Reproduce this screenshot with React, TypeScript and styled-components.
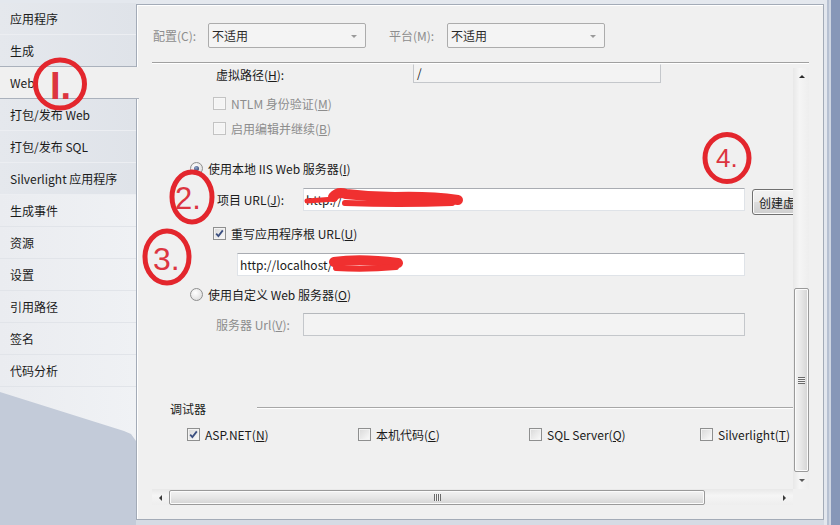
import React from "react";
import styled, { createGlobalStyle } from "styled-components";

const GlobalStyle = createGlobalStyle`
  html, body { margin: 0; padding: 0; background: #c3cbd9; }
  body {
    font-family: "Noto Sans CJK SC", "Noto Sans", sans-serif;
    font-size: 12px;
    color: #1b1b1b;
  }
  * { box-sizing: border-box; }
`;

const Frame = styled.div`
  position: relative;
  width: 840px;
  height: 525px;
  overflow: hidden;
  display: flex;
  background: #c3cbd9;
`;

/* ---------- sidebar ---------- */
const Sidebar = styled.nav`
  width: 136px;
  flex: none;
  display: flex;
  flex-direction: column;
  padding-top: 3px;
  background: linear-gradient(180deg, #e4e8ee 0 3px, #c3cbd9 3px);
  position: relative;
  z-index: 2;
`;

const Tab = styled.div<{ $active?: boolean; $tone?: "box" | "light"; $strong?: boolean }>`
  height: 32px;
  display: flex;
  align-items: center;
  padding-left: 10px;
  white-space: nowrap;
  color: #1b1b1b;
  margin-right: ${(p) => (p.$active ? "-3px" : "0")};
  background: ${(p) =>
    p.$active
      ? "#f0f0f0"
      : p.$tone === "box"
      ? "linear-gradient(90deg, #e5e8ed, #dfe3e9)"
      : "linear-gradient(90deg, #eaecf0, #eff1f4)"};
  border-bottom: 1px solid ${(p) => (p.$strong ? "#aab1bc" : p.$tone === "box" ? "#eceef2" : "#e1e4e9")};
`;

const Swoosh = styled.div`
  height: 54px;
  background: linear-gradient(90deg, #eaecf0, #f0f2f5);
  clip-path: polygon(0 0, 100% 0, 100% 54px, 131px 47px, 124px 44px, 0 5px);
`;

/* ---------- main column ---------- */
const Main = styled.div`
  width: 688px;
  flex: none;
  display: flex;
  flex-direction: column;
  padding: 4px 0 5px;
  background: linear-gradient(180deg, #e4e8ee 0 4px, #d5dbe4 4px);
`;

const RightFrame = styled.div`
  width: 16px;
  flex: none;
  background: linear-gradient(90deg, #e3e7ee 0 3px, #b7c1d2 3px 5px, #cfd6e2 5px 7px, #8797b8 7px);
`;

const Panel = styled.section`
  flex: 1;
  min-height: 0;
  border: 1px solid #a3abb7;
  background: #f0f0f0;
  box-shadow: inset 1px 1px 0 #ffffff;
  padding: 0 14px 14px 15px;
  display: flex;
  flex-direction: column;
`;

const ConfigBar = styled.div`
  height: 57px;
  flex: none;
  display: flex;
  align-items: center;
  padding: 3px 0 0 1px;
`;

const ConfigLabel = styled.span<{ $ml?: number; $w: number }>`
  flex: none;
  width: ${(p) => p.$w}px;
  color: #8d8d8d;
  margin-left: ${(p) => p.$ml ?? 0}px;
`;

const Combo = styled.div`
  position: relative;
  width: 158px;
  height: 25px;
  border: 1px solid #acacac;
  border-radius: 2px;
  background: #f4f4f4;
  display: flex;
  align-items: center;
  padding-left: 3px;
  color: #2a2a2a;
  &::after {
    content: "";
    position: absolute;
    right: 8px;
    top: 11px;
    border-left: 3px solid transparent;
    border-right: 3px solid transparent;
    border-top: 3px solid #9a9a9a;
  }
`;

const Separator = styled.div`
  height: 2px;
  flex: none;
  border-top: 1px solid #a0a0a0;
  border-bottom: 1px solid #ffffff;
`;

const Body = styled.div`
  flex: 1;
  min-height: 0;
  display: grid;
  grid-template-columns: 1fr 16px;
  grid-template-rows: 1fr 16px;
`;

const Viewport = styled.div`
  overflow: hidden;
  min-width: 0;
  display: flex;
  flex-direction: column;
`;

const Row = styled.div<{ $h: number; $mt?: number; $pl: number; $top?: boolean }>`
  flex: none;
  height: ${(p) => p.$h}px;
  margin-top: ${(p) => p.$mt ?? 0}px;
  padding-left: ${(p) => p.$pl}px;
  display: flex;
  align-items: ${(p) => (p.$top ? "flex-start" : "center")};
  white-space: nowrap;
`;

const Label = styled.span<{ $w?: number; $dim?: boolean; $lh?: number }>`
  flex: none;
  width: ${(p) => (p.$w ? `${p.$w}px` : "auto")};
  color: ${(p) => (p.$dim ? "#8d8d8d" : "#1b1b1b")};
  line-height: ${(p) => (p.$lh ? `${p.$lh}px` : "normal")};
`;

const U = styled.span`
  text-decoration: underline;
  text-underline-offset: 1px;
`;

const TextBox = styled.div<{ $w: number; $disabled?: boolean; $h?: number; $scrolled?: boolean }>`
  flex: none;
  width: ${(p) => p.$w}px;
  height: ${(p) => p.$h ?? 23}px;
  border: 1px solid ${(p) => (p.$disabled ? "#c4c7cb" : "#dfe3e8")};
  border-top-color: ${(p) => (p.$scrolled ? "transparent" : p.$disabled ? "#b5b8bc" : "#a9acb2")};
  background: ${(p) => (p.$disabled ? "#f3f3f3" : "#ffffff")};
  display: flex;
  align-items: ${(p) => (p.$scrolled ? "flex-end" : "center")};
  padding: ${(p) => (p.$scrolled ? "0 0 1px 3px" : "0 0 0 2px")};
  color: #1b1b1b;
  overflow: hidden;
`;

const PushButton = styled.div`
  flex: none;
  height: 26px;
  margin: 1px 0 0 7px;
  padding: 0 8px 0 6px;
  border: 1px solid #707070;
  border-radius: 3px;
  background: linear-gradient(180deg, #f2f2f2 0%, #ebebeb 48%, #dddddd 52%, #cfcfcf 100%);
  box-shadow: inset 0 0 0 1px #fbfbfb;
  display: flex;
  align-items: center;
  color: #1b1b1b;
`;

const CheckItem = styled.label`
  display: inline-flex;
  align-items: center;
  gap: 5px;
  white-space: nowrap;
`;

const Box = styled.span<{ $disabled?: boolean }>`
  width: 13px;
  height: 13px;
  flex: none;
  display: inline-flex;
  align-items: center;
  justify-content: center;
  border: 1px solid ${(p) => (p.$disabled ? "#c3c3c3" : "#8e8f8f")};
  background: ${(p) => (p.$disabled ? "#f4f4f4" : "linear-gradient(135deg, #d8d8d8, #fbfbfb)")};
  box-shadow: inset 0 0 0 1px ${(p) => (p.$disabled ? "#f7f7f7" : "#f3f3f3")};
`;

const RadioDot = styled.span<{ $on?: boolean }>`
  width: 13px;
  height: 13px;
  flex: none;
  border-radius: 50%;
  border: 1px solid #8e8f8f;
  background: radial-gradient(circle at 40% 35%, #ffffff, #d6d6d6);
  display: inline-flex;
  align-items: center;
  justify-content: center;
  &::after {
    content: "";
    width: 5px;
    height: 5px;
    border-radius: 50%;
    background: ${(p) => (p.$on ? "radial-gradient(circle at 40% 35%, #8fa6cf, #1f2f55)" : "transparent")};
  }
`;

const GroupLine = styled.div`
  flex: 1;
  height: 2px;
  margin-left: 51px;
  border-top: 1px solid #a7a7a7;
  border-bottom: 1px solid #ffffff;
`;

const DebugGrid = styled.div`
  display: grid;
  grid-template-columns: repeat(4, 171px);
`;

/* ---------- scrollbars ---------- */
const VScroll = styled.div`
  margin-top: 4px;
  display: flex;
  flex-direction: column;
  background: linear-gradient(90deg, #e8e8e8, #f5f5f5 40%, #eeeeee);
`;

const HScroll = styled.div`
  display: flex;
  background: linear-gradient(180deg, #e8e8e8, #f5f5f5 40%, #eeeeee);
`;

const Corner = styled.div`
  background: #f0f0f0;
`;

const ArrowBtn = styled.div`
  width: 17px;
  height: 17px;
  flex: none;
  display: flex;
  align-items: center;
  justify-content: center;
`;

const Glyph = styled.span<{ $dir: "up" | "down" | "left" | "right" }>`
  width: 0;
  height: 0;
  ${(p) =>
    p.$dir === "up"
      ? "border-left:3px solid transparent;border-right:3px solid transparent;border-bottom:3px solid #2b2b2b;"
      : p.$dir === "down"
      ? "border-left:3px solid transparent;border-right:3px solid transparent;border-top:3px solid #5a5a5a;"
      : p.$dir === "left"
      ? "border-top:3px solid transparent;border-bottom:3px solid transparent;border-right:3px solid #3a3a3a;"
      : "border-top:3px solid transparent;border-bottom:3px solid transparent;border-left:3px solid #3a3a3a;"}
`;

const Track = styled.div<{ $vertical?: boolean }>`
  flex: 1;
  display: flex;
  flex-direction: ${(p) => (p.$vertical ? "column" : "row")};
  justify-content: flex-end;
`;

const Thumb = styled.div<{ $vertical?: boolean; $size: number }>`
  flex: none;
  ${(p) =>
    p.$vertical
      ? `width: 15px; height: ${p.$size}px; margin-left: 1px;
         background: linear-gradient(90deg, #f3f3f3, #e6e6e6 50%, #d4d4d4);`
      : `height: 15px; width: ${p.$size}px; margin-top: 1px;
         background: linear-gradient(180deg, #f3f3f3, #e6e6e6 50%, #d4d4d4);`}
  border: 1px solid #9a9a9a;
  border-radius: 2px;
  box-shadow: inset 0 0 0 1px #fbfbfb;
  display: flex;
  align-items: center;
  justify-content: center;
`;

const Grip = styled.span<{ $vertical?: boolean }>`
  width: 7px;
  height: 7px;
  background: ${(p) =>
    p.$vertical
      ? "repeating-linear-gradient(180deg, #6a6a6a 0 1px, #f2f2f2 1px 2px)"
      : "repeating-linear-gradient(90deg, #6a6a6a 0 1px, #f2f2f2 1px 2px)"};
`;

const HSpacer = styled.div<{ $w: number }>`
  width: ${(p) => p.$w}px;
  flex: none;
`;

/* ---------- annotation overlay ---------- */
const Overlay = styled.svg`
  position: absolute;
  left: 0;
  top: 0;
  width: 840px;
  height: 525px;
  pointer-events: none;
  z-index: 5;
`;

const Check = () => (
  <svg width="9" height="9" viewBox="0 0 9 9">
    <path d="M1.2 4.6 L3.4 7 L7.8 1.4" fill="none" stroke="#3b4f80" strokeWidth="1.8" />
  </svg>
);

const tabs: { label: string; tone: "box" | "light"; active?: boolean; strong?: boolean }[] = [
  { label: "应用程序", tone: "box" },
  { label: "生成", tone: "box", strong: true },
  { label: "Web", tone: "box", active: true, strong: true },
  { label: "打包/发布 Web", tone: "box" },
  { label: "打包/发布 SQL", tone: "box" },
  { label: "Silverlight 应用程序", tone: "box" },
  { label: "生成事件", tone: "light" },
  { label: "资源", tone: "light" },
  { label: "设置", tone: "light" },
  { label: "引用路径", tone: "light" },
  { label: "签名", tone: "light" },
  { label: "代码分析", tone: "light" },
];

export default function App() {
  return (
    <>
      <GlobalStyle />
      <Frame>
        <Sidebar>
          {tabs.map((t) => (
            <Tab key={t.label} $active={t.active} $tone={t.tone} $strong={t.strong}>
              {t.label}
            </Tab>
          ))}
          <Swoosh />
        </Sidebar>

        <Main>
          <Panel>
            <ConfigBar>
              <ConfigLabel $w={55}>配置(C):</ConfigLabel>
              <Combo>不适用</Combo>
              <ConfigLabel $ml={23} $w={58}>
                平台(M):
              </ConfigLabel>
              <Combo>不适用</Combo>
            </ConfigBar>
            <Separator />
            <Body>
              <Viewport>
                <Row $h={21} $pl={64} $top>
                  <Label $w={197} $lh={21}>
                    虚拟路径(<U>H</U>):
                  </Label>
                  <TextBox $w={248} $h={19} $disabled $scrolled>
                    /
                  </TextBox>
                </Row>
                <Row $h={20} $mt={8} $pl={61}>
                  <CheckItem>
                    <Box $disabled />
                    <Label $dim>
                      NTLM 身份验证(<U>M</U>)
                    </Label>
                  </CheckItem>
                </Row>
                <Row $h={20} $mt={5} $pl={61}>
                  <CheckItem>
                    <Box $disabled />
                    <Label $dim>
                      启用编辑并继续(<U>B</U>)
                    </Label>
                  </CheckItem>
                </Row>
                <Row $h={20} $mt={20} $pl={38}>
                  <CheckItem>
                    <RadioDot $on />
                    <Label>
                      使用本地 IIS Web 服务器(<U>I</U>)
                    </Label>
                  </CheckItem>
                </Row>
                <Row $h={27} $mt={10} $pl={65} $top>
                  <Label $w={86} $lh={23}>
                    项目 URL(<U>J</U>):
                  </Label>
                  <TextBox $w={442}>http://</TextBox>
                  <PushButton>创建虚拟目录</PushButton>
                </Row>
                <Row $h={20} $mt={8} $pl={61}>
                  <CheckItem>
                    <Box>
                      <Check />
                    </Box>
                    <Label>
                      重写应用程序根 URL(<U>U</U>)
                    </Label>
                  </CheckItem>
                </Row>
                <Row $h={23} $mt={10} $pl={85}>
                  <TextBox $w={508}>http://localhost/</TextBox>
                </Row>
                <Row $h={20} $mt={8} $pl={38}>
                  <CheckItem>
                    <RadioDot />
                    <Label>
                      使用自定义 Web 服务器(<U>O</U>)
                    </Label>
                  </CheckItem>
                </Row>
                <Row $h={23} $mt={9} $pl={64}>
                  <Label $w={87} $dim>
                    服务器 Url(<U>V</U>):
                  </Label>
                  <TextBox $w={442} $disabled />
                </Row>
                <Row $h={20} $mt={62} $pl={18}>
                  <Label>调试器</Label>
                  <GroupLine />
                </Row>
                <Row $h={20} $mt={6} $pl={35}>
                  <DebugGrid>
                    <CheckItem>
                      <Box>
                        <Check />
                      </Box>
                      <Label>
                        ASP.NET(<U>N</U>)
                      </Label>
                    </CheckItem>
                    <CheckItem>
                      <Box />
                      <Label>
                        本机代码(<U>C</U>)
                      </Label>
                    </CheckItem>
                    <CheckItem>
                      <Box />
                      <Label>
                        SQL Server(<U>Q</U>)
                      </Label>
                    </CheckItem>
                    <CheckItem>
                      <Box />
                      <Label>
                        Silverlight(<U>T</U>)
                      </Label>
                    </CheckItem>
                  </DebugGrid>
                </Row>
              </Viewport>

              <VScroll>
                <ArrowBtn>
                  <Glyph $dir="up" />
                </ArrowBtn>
                <Track $vertical>
                  <Thumb $vertical $size={184}>
                    <Grip $vertical />
                  </Thumb>
                </Track>
                <ArrowBtn>
                  <Glyph $dir="down" />
                </ArrowBtn>
              </VScroll>

              <HScroll>
                <ArrowBtn>
                  <Glyph $dir="left" />
                </ArrowBtn>
                <Thumb $size={536}>
                  <Grip />
                </Thumb>
                <HSpacer $w={71} />
                <ArrowBtn>
                  <Glyph $dir="right" />
                </ArrowBtn>
              </HScroll>
              <Corner />
            </Body>
          </Panel>
        </Main>
        <RightFrame />

        <Overlay viewBox="0 0 840 525">
          {/* red scribbles hiding URLs */}
          <g fill="none" stroke="#f03030" strokeLinecap="round" strokeLinejoin="round">
            <path d="M307 201 L335 199" strokeWidth="5" />
            <path d="M333 197 Q338 191 346 194 Q370 197 395 197 Q430 196 458 200" strokeWidth="10" />
            <path d="M345 203 Q400 205 452 203" strokeWidth="6" />
            <path d="M334 262 Q360 258 398 263" strokeWidth="10" />
            <path d="M336 268 Q365 270 396 267" strokeWidth="6" />
          </g>
          {/* numbered circles */}
          <g fill="none" stroke="#e3262d" strokeWidth="5">
            <ellipse cx="60" cy="84" rx="24.5" ry="24" />
            <ellipse cx="192" cy="197" rx="20" ry="25" />
            <ellipse cx="167" cy="257" rx="22" ry="26" />
            <ellipse cx="727" cy="158" rx="22" ry="23.5" />
          </g>
          <g fill="#dc3540" fontFamily="Liberation Sans, sans-serif">
            <text x="50" y="99" fontSize="38" fontWeight="bold">
              I.
            </text>
            <text x="175" y="209" fontSize="31">
              2.
            </text>
            <text x="153" y="270" fontSize="32">
              3.
            </text>
            <text x="716" y="167" fontSize="26">
              4.
            </text>
          </g>
        </Overlay>
      </Frame>
    </>
  );
}
